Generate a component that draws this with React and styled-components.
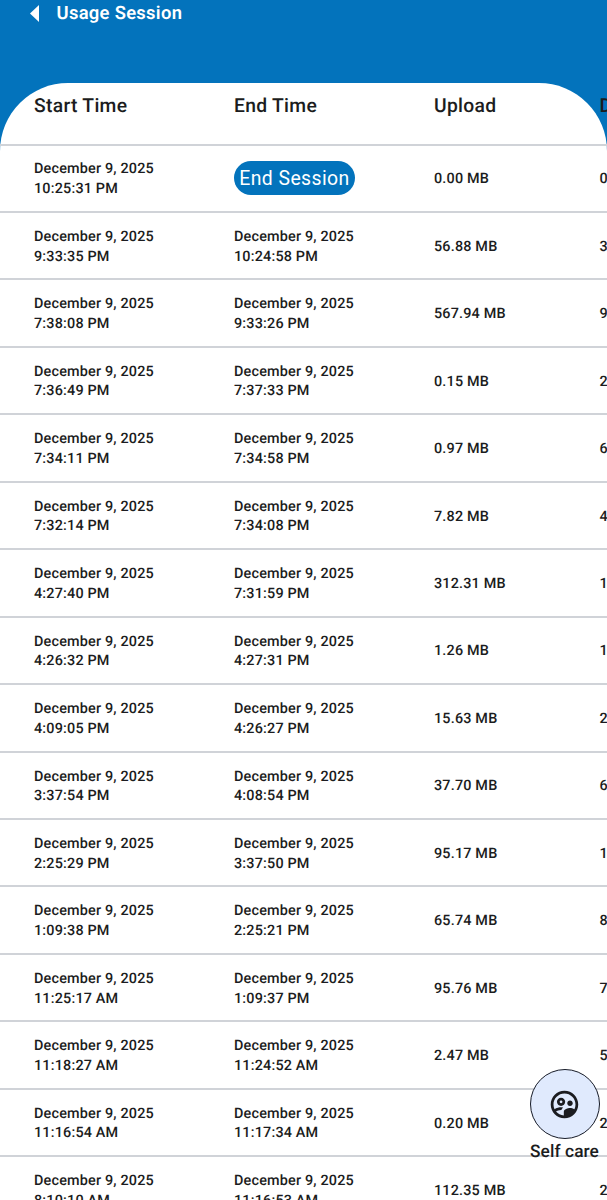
import React from 'react';
import styled, { createGlobalStyle } from 'styled-components';
import { MdOutlineSupervisedUserCircle } from 'react-icons/md';

const GlobalStyle = createGlobalStyle`
  * {
    box-sizing: border-box;
  }
  body {
    margin: 0;
    overflow: hidden;
    background: #0373bc;
    color: #1b1c20;
    font-family: Roboto, 'Liberation Sans', sans-serif;
    text-rendering: geometricPrecision;
  }
`;

const Screen = styled.div`
  height: 1200px;
  overflow: hidden;
  background: #0373bc;
`;

const AppBar = styled.header`
  display: flex;
  align-items: flex-start;
  gap: 17.5px;
  height: 83px;
  padding: 3px 0 0 30px;
  color: #fff;
`;

const BackIcon = styled.svg`
  width: 9px;
  height: 17px;
  margin-top: 2px;
`;

const PageTitle = styled.h1`
  margin: 0;
  font-size: 18.4px;
  font-weight: 600;
  line-height: 22px;
  letter-spacing: 0.3px;
`;

const Sheet = styled.main`
  height: 1117px;
  border-radius: 68px 68px 0 0;
  background: #fff;
`;

const Row = styled.div`
  display: grid;
  grid-template-columns: 200px 200px 165.5px 100px;
  align-items: center;
  height: 67.46px;
  padding: 1.8px 0 0 34px;
  border-bottom: 2px solid #d0d3d8;
`;

const HeadRow = styled(Row)`
  align-items: flex-start;
  height: 62.5px;
  padding-top: 10px;
  font-size: 19.3px;
  font-weight: 480;
  line-height: 25px;
  letter-spacing: 0.3px;
`;

const Cell = styled.div`
  font-size: 14.4px;
  font-weight: 460;
  line-height: 19.7px;
  letter-spacing: 0.18px;
  white-space: nowrap;
`;

const EndButton = styled.button`
  width: 121px;
  height: 34px;
  margin-top: -2.8px;
  padding: 1px 0 0;
  border: 0;
  border-radius: 17px;
  background: #0373bc;
  color: #fff;
  font-family: inherit;
  font-size: 19.4px;
  letter-spacing: 0.42px;
  white-space: nowrap;
`;

const SelfCare = styled.div`
  position: absolute;
  top: 1069px;
  left: 523.5px;
  display: flex;
  flex-direction: column;
  align-items: center;
  width: 82px;
  font-size: 17.3px;
  font-weight: 500;
  line-height: 20px;
  letter-spacing: 0.1px;
  white-space: nowrap;
`;

const SelfCareButton = styled.div`
  display: flex;
  align-items: center;
  justify-content: center;
  width: 70px;
  height: 70px;
  margin-bottom: 3px;
  border: 1.5px solid #161b28;
  border-radius: 50%;
  background: #e0eafd;
`;

const DATE = 'December 9, 2025';

const sessions = [
  { start: '10:25:31 PM', end: null, upload: '0.00 MB', download: '0' },
  { start: '9:33:35 PM', end: '10:24:58 PM', upload: '56.88 MB', download: '3' },
  { start: '7:38:08 PM', end: '9:33:26 PM', upload: '567.94 MB', download: '9' },
  { start: '7:36:49 PM', end: '7:37:33 PM', upload: '0.15 MB', download: '2' },
  { start: '7:34:11 PM', end: '7:34:58 PM', upload: '0.97 MB', download: '6' },
  { start: '7:32:14 PM', end: '7:34:08 PM', upload: '7.82 MB', download: '4' },
  { start: '4:27:40 PM', end: '7:31:59 PM', upload: '312.31 MB', download: '1' },
  { start: '4:26:32 PM', end: '4:27:31 PM', upload: '1.26 MB', download: '1' },
  { start: '4:09:05 PM', end: '4:26:27 PM', upload: '15.63 MB', download: '2' },
  { start: '3:37:54 PM', end: '4:08:54 PM', upload: '37.70 MB', download: '6' },
  { start: '2:25:29 PM', end: '3:37:50 PM', upload: '95.17 MB', download: '1' },
  { start: '1:09:38 PM', end: '2:25:21 PM', upload: '65.74 MB', download: '8' },
  { start: '11:25:17 AM', end: '1:09:37 PM', upload: '95.76 MB', download: '7' },
  { start: '11:18:27 AM', end: '11:24:52 AM', upload: '2.47 MB', download: '5' },
  { start: '11:16:54 AM', end: '11:17:34 AM', upload: '0.20 MB', download: '2' },
  { start: '8:10:10 AM', end: '11:16:53 AM', upload: '112.35 MB', download: '2' },
];

const Stamp = ({ time }) => (
  <Cell>
    {DATE}
    <br />
    {time}
  </Cell>
);

const App = () => (
  <>
    <GlobalStyle />
    <Screen>
      <AppBar>
        <BackIcon viewBox="0 0 9 17">
          <path d="M9 0v17L0 8.5z" fill="currentColor" />
        </BackIcon>
        <PageTitle>Usage Session</PageTitle>
      </AppBar>
      <Sheet>
        <HeadRow>
          <span>Start Time</span>
          <span>End Time</span>
          <span>Upload</span>
          <span>D</span>
        </HeadRow>
        {sessions.map(({ start, end, upload, download }) => (
          <Row key={start}>
            <Stamp time={start} />
            {end ? <Stamp time={end} /> : <EndButton>End Session</EndButton>}
            <Cell>{upload}</Cell>
            <Cell>{download}</Cell>
          </Row>
        ))}
      </Sheet>
      <SelfCare>
        <SelfCareButton>
          <MdOutlineSupervisedUserCircle size={33} />
        </SelfCareButton>
        Self care
      </SelfCare>
    </Screen>
  </>
);

export default App;
